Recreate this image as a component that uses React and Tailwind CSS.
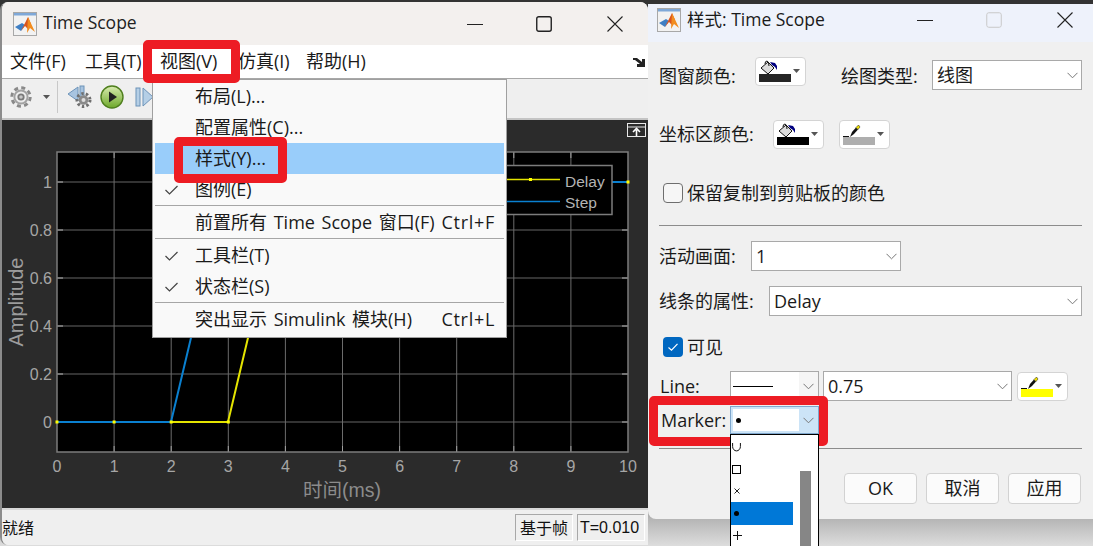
const XTICKS = [0, 1, 2, 3, 4, 5, 6, 7, 8, 9, 10];
const YTICKS = [
  { label: '0', y: 422 },
  { label: '0.2', y: 374 },
  { label: '0.4', y: 326 },
  { label: '0.6', y: 278 },
  { label: '0.8', y: 230 },
  { label: '1', y: 182 },
];
const xPos = (i) => 57 + i * 57.1;

const MENU_BAR = [
  { label: '文件(F)', w: 'w-[75px]' },
  { label: '工具(T)', w: 'w-[75px]' },
  { label: '视图(V)', w: 'w-[78px]' },
  { label: '仿真(I)', w: 'w-[68px]' },
  { label: '帮助(H)', w: 'w-[70px]' },
];

function MatlabIcon() {
  return (
    <svg width="24" height="24" viewBox="0 0 24 24" className="shrink-0">
      <rect x="0.5" y="0.5" width="23" height="23" fill="#f2f2f2" stroke="#a8a8a8" />
      <rect x="1" y="1" width="22" height="2.5" fill="#7fa8d8" />
      <path d="M2 15 L9 11 L12 13 L8 19 Z" fill="#3f7fc4" />
      <path d="M8 19 L12 11 L15 5 L18 12 L15 17 L12 14 Z" fill="#d9541e" />
      <path d="M15 5 L22 20 L17 16 L14 21 Z" fill="#f28c1e" />
    </svg>
  );
}

function Gear({ size = 22 }) {
  return (
    <svg width={size} height={size} viewBox="0 0 22 22">
      <circle cx="11" cy="11" r="9.2" fill="none" stroke="#8a8a8a" strokeWidth="3" strokeDasharray="4 3.22" />
      <circle cx="11" cy="11" r="7.6" fill="#a2a2a2" />
      <circle cx="11" cy="11" r="5.6" fill="#ececec" />
      <circle cx="11" cy="11" r="3.6" fill="#7a7a7a" />
      <circle cx="11" cy="11" r="1.8" fill="#c8c8c8" />
    </svg>
  );
}

function Caret({ className }) {
  return (
    <svg width="7" height="4" viewBox="0 0 7 4" className={className}>
      <path d="M0 0 H7 L3.5 4 Z" fill="#555" />
    </svg>
  );
}

function Chevron() {
  return (
    <svg width="11" height="7" viewBox="0 0 11 7" className="shrink-0">
      <path d="M0.5 0.8 L5.5 5.8 L10.5 0.8" fill="none" stroke="#777" />
    </svg>
  );
}

function Bucket() {
  return (
    <svg width="24" height="18" viewBox="0 0 24 18" className="absolute left-0 top-0">
      <path d="M5 10 L12 4 L18 10 L12 16 Z" fill="#dcdcdc" stroke="#111" />
      <path d="M9 6 Q9 3 11 3 Q13 3 13 8" fill="none" stroke="#111" />
      <path d="M14 4 L19 5 L21 8 L21 12 L19 9 L16 7 Z" fill="#000080" />
    </svg>
  );
}

function Pencil() {
  return (
    <svg width="24" height="18" viewBox="0 0 24 18" className="absolute left-0 top-0">
      <path d="M3 15.5 H9" stroke="#111" />
      <path d="M10 16 L12 11 L16 6.5 L18 8.5 L14 13 Z" fill="#111" />
      <path d="M16 6.5 L18.5 4 L20 6 L18 8.5 Z" fill="#f0e000" stroke="#111" strokeWidth="0.5" />
    </svg>
  );
}

function ColorButton({ swatch, icon }) {
  return (
    <div className="relative w-[51px] h-[29px] rounded-[4px] border border-[#d4d4d4] bg-white shrink-0">
      {icon}
      <div className={`absolute left-[3px] top-[16px] w-[32px] h-[8px] ${swatch}`} />
      <Caret className="absolute right-[5px] top-[11px]" />
    </div>
  );
}

function Combo({ width, height = 'h-[30px]', children }) {
  return (
    <div className={`flex items-center justify-between border border-[#a9a9a9] bg-white pl-[4px] pr-[3px] shrink-0 ${width} ${height}`}>
      <span className="truncate">{children}</span>
      <Chevron />
    </div>
  );
}

function Check({ on }) {
  if (on) {
    return (
      <span className="flex items-center justify-center w-[20px] h-[20px] rounded-[4px] bg-[#0067c0] shrink-0">
        <svg width="12" height="10" viewBox="0 0 12 10">
          <path d="M1.5 5.5 L4.5 8.2 L10.5 1.8" fill="none" stroke="#fff" strokeWidth="1.2" />
        </svg>
      </span>
    );
  }
  return <span className="w-[20px] h-[20px] rounded-[4px] border border-[#6e6e6e] bg-[#f6f6f6] shrink-0" />;
}

function DialogButton({ children }) {
  return (
    <div className="flex items-center justify-center w-[73px] h-[31px] rounded-[4px] border border-[#d2d2d2] bg-[#fbfbfb]">
      {children}
    </div>
  );
}

function WindowButtons({ disabled }) {
  return (
    <div className="flex items-center ml-auto">
      <svg width="16" height="16" viewBox="0 0 16 16">
        <path d="M0 8.5 H16" stroke="#222" />
      </svg>
      <svg width="16" height="16" viewBox="0 0 16 16" className="ml-[53px]">
        <rect x="0.75" y="0.75" width="14.5" height="14.5" rx="2" fill="none" stroke={disabled ? '#c8c8c8' : '#222'} strokeWidth={disabled ? 1 : 1.4} />
      </svg>
      <svg width="16" height="16" viewBox="0 0 16 16" className="ml-[55px]">
        <path d="M0.5 0.5 L15.5 15.5 M15.5 0.5 L0.5 15.5" stroke="#222" strokeWidth="1.1" />
      </svg>
    </div>
  );
}

function Plot() {
  return (
    <svg viewBox="2 120 646 388" width="646" height="388" className="block shrink-0">
      <rect x="2" y="120" width="646" height="388" fill="#2b2b2b" />
      <rect x="57" y="152" width="571" height="300" fill="#000" />
      {YTICKS.map((t) => (
        <line key={t.label} x1="57" x2="628" y1={t.y} y2={t.y} stroke="#454545" strokeWidth="1.5" />
      ))}
      {XTICKS.slice(1, 10).map((i) => (
        <line key={i} x1={xPos(i)} x2={xPos(i)} y1="152" y2="452" stroke="#6c6c6c" />
      ))}
      {YTICKS.map((t) => (
        <g key={t.label} stroke="#8a8a8a" strokeWidth="1.5">
          <line x1="57" x2="63" y1={t.y} y2={t.y} />
          <line x1="622" x2="628" y1={t.y} y2={t.y} />
        </g>
      ))}
      {XTICKS.slice(1, 10).map((i) => (
        <g key={i} stroke="#a0a0a0">
          <line x1={xPos(i)} x2={xPos(i)} y1="446" y2="452" />
          <line x1={xPos(i)} x2={xPos(i)} y1="152" y2="158" />
        </g>
      ))}
      <rect x="57" y="152" width="571" height="300" fill="none" stroke="#7c7c7c" strokeWidth="1.5" />

      <polyline points="57,422 228,422 285,182 628,182" fill="none" stroke="#e4e400" strokeWidth="2" />
      <polyline points="57,422 171,422 228,182 628,182" fill="none" stroke="#0a80d0" strokeWidth="2" />
      {XTICKS.map((i) => (
        <rect key={i} x={xPos(i) - 1.5} y={i < 4 ? 420.5 : 180.5} width="3" height="3" fill="#ffff00" />
      ))}

      <rect x="400" y="165.5" width="212" height="49" fill="#000" stroke="#7c7c7c" strokeWidth="1.5" />
      <line x1="410" x2="560" y1="179.5" y2="179.5" stroke="#e4e400" strokeWidth="1.5" />
      <rect x="529" y="178" width="3" height="3" fill="#ffff00" />
      <line x1="410" x2="560" y1="201.5" y2="201.5" stroke="#0a80d0" strokeWidth="1.5" />
      <g className="font-['Liberation_Sans',sans-serif] text-[15.5px]" fill="#b4b4b4">
        <text x="565" y="187">Delay</text>
        <text x="565" y="208">Step</text>
      </g>

      <g className="font-['Liberation_Sans',sans-serif] text-[16px]" fill="#a6a6a6">
        {XTICKS.map((i) => (
          <text key={i} x={xPos(i)} y="472" textAnchor="middle">{i}</text>
        ))}
        {YTICKS.map((t) => (
          <text key={t.label} x="52" y={t.y + 6} textAnchor="end">{t.label}</text>
        ))}
      </g>
      <text x="342" y="497" textAnchor="middle" fill="#8c8c8c" className="font-['Liberation_Sans','Noto_Sans_CJK_SC',sans-serif] text-[19.5px]">时间(ms)</text>
      <text transform="translate(23 302) rotate(-90)" textAnchor="middle" fill="#9c9c9c" className="font-['Liberation_Sans',sans-serif] text-[20px]">Amplitude</text>

      {/* undock button */}
      <rect x="627.5" y="123.5" width="18" height="13" fill="#2b2b2b" stroke="#e8e8e8" />
      <path d="M628 127 H645" stroke="#e8e8e8" />
      <path d="M636.5 136 V130 M633 132 L636.5 128.5 L640 132" fill="none" stroke="#fff" strokeWidth="1.6" />
    </svg>
  );
}

function Toolbar() {
  return (
    <div className="flex items-center h-[41px] shrink-0 bg-[#efefef] pl-[8px] pb-[3px] border-b-2 border-[#c4c4c4]">
      <Gear />
      <Caret className="ml-[11px]" />
      <div className="w-px h-[32px] bg-[#c8c8c8] ml-[7px]" />
      <svg width="25" height="24" viewBox="0 0 25 24" className="ml-[10px]">
        <path d="M0 9 L10 2 V16 Z" fill="#a8c4e0" stroke="#6d93b8" />
        <rect x="12" y="1" width="4" height="12" fill="#a8c4e0" stroke="#6d93b8" />
        <circle cx="15.5" cy="15" r="6.5" fill="none" stroke="#6f6f6f" strokeWidth="3" strokeDasharray="2.4 2.2" />
        <circle cx="15.5" cy="15" r="4.8" fill="#8a8a8a" />
        <circle cx="15.5" cy="15" r="2" fill="#ddd" />
      </svg>
      <svg width="24" height="24" viewBox="0 0 24 24" className="ml-[7px]">
        <defs>
          <linearGradient id="playFill" x1="0" y1="0" x2="0" y2="1">
            <stop offset="0" stopColor="#d9ecb0" />
            <stop offset="1" stopColor="#6da82a" />
          </linearGradient>
        </defs>
        <circle cx="12" cy="12" r="11" fill="url(#playFill)" stroke="#4f7f1e" strokeWidth="1.4" />
        <path d="M9 6.5 L17 12 L9 17.5 Z" fill="#222" />
      </svg>
      <svg width="18" height="24" viewBox="0 0 18 24" className="ml-[11px]">
        <rect x="1" y="3" width="4" height="18" fill="#b5cfe6" stroke="#6d93b8" />
        <path d="M8 3 L18 12 L8 21 Z" fill="#b5cfe6" stroke="#6d93b8" />
      </svg>
    </div>
  );
}

function ScopeWindow() {
  return (
    <section className="absolute left-0 top-[2px] w-[648px] h-[543px] flex flex-col overflow-hidden rounded-t-[8px] rounded-bl-[8px] bg-[#efefef] border-l-2 border-[#8c8c8c]">
      <header className="flex items-center h-[43px] shrink-0 bg-[#f3f0ee] pl-[11px] pr-[25px] text-[#222]">
        <MatlabIcon />
        <span className="ml-[6px] text-[17.5px] -mt-[2px]">Time Scope</span>
        <WindowButtons />
      </header>
      <nav className="relative flex items-center h-[34px] shrink-0 bg-white pl-[8px] border-b border-[#a8a8a8] text-[18px] text-[#1a1a1a]">
        {MENU_BAR.map((m) => (
          <span key={m.label} className={m.w}>{m.label}</span>
        ))}
        <svg width="12" height="10" viewBox="0 0 12 10" className="ml-auto mr-[3px]">
          <path d="M0 1 L4 1 L9 5 V2 H12 V10 H4 V7 H7 L2 3 H0 Z" fill="#222" />
        </svg>
      </nav>
      <Toolbar />
      <Plot />
      <footer className="flex items-center flex-1 border-t-2 border-[#d8d8d8] bg-[#efefef] text-[16px] text-[#111]">
        <span>就绪</span>
        <div className="flex items-center justify-center ml-auto w-[58px] h-[27px] border-l border-t border-[#a8a8a8] border-r-white border-b-white border-r border-b">基于帧</div>
        <div className="flex items-center pl-[2px] ml-[4px] mr-[3px] w-[68px] h-[27px] font-['Liberation_Sans',sans-serif] border-l border-t border-[#a8a8a8] border-r-white border-b-white border-r border-b">T=0.010</div>
      </footer>
    </section>
  );
}

const MENU_ROWS = [
  { label: '布局(L)...' },
  { label: '配置属性(C)...' },
  { label: '样式(Y)...', hot: true },
  { label: '图例(E)', check: true, sep: true },
  { label: '前置所有 Time Scope 窗口(F)', key_: 'Ctrl+F', sep: true },
  { label: '工具栏(T)', check: true },
  { label: '状态栏(S)', check: true, sep: true },
  { label: '突出显示 Simulink 模块(H)', key_: 'Ctrl+L' },
];

function ViewMenu() {
  return (
    <div className="absolute left-[152px] top-[79px] w-[355px] h-[259px] pt-[1px] px-[2px] bg-[#f9f9f9] border border-[#a0a0a0] text-[18px] text-[#1a1a1a]">
      {MENU_ROWS.map((r) => (
        <div key={r.label} className={r.sep ? 'border-b border-[#a6a6a6] mb-[1px]' : ''}>
          <div className={`relative flex items-center h-[31px] pl-[40px] pr-[9px] ${r.hot ? 'bg-[#99cdfa]' : ''}`}>
            {r.check && (
              <svg width="13" height="10" viewBox="0 0 13 10" className="absolute left-[10px] top-[11px]">
                <path d="M0.5 5 L4.5 9 L12.5 1" fill="none" stroke="#444" strokeWidth="1.2" />
              </svg>
            )}
            <span className="[word-spacing:2px]">{r.label}</span>
            {r.key_ && <span className="ml-auto tracking-[0.7px]">{r.key_}</span>}
          </div>
        </div>
      ))}
    </div>
  );
}

function StyleDialog() {
  return (
    <section className="absolute left-[648px] top-[4px] w-[445px] h-[515px] flex flex-col rounded-bl-[8px] bg-[#f0f0f0] text-[18px] text-[#1a1a1a]">
      <header className="flex items-center h-[38px] bg-[#eef2fb] pl-[9px] pr-[20px] pb-[7px] text-[17.5px]">
        <MatlabIcon />
        <span className="ml-[6px]">样式: Time Scope</span>
        <WindowButtons disabled />
      </header>
      <div className="flex flex-col pl-[11px] pr-[11px] pt-[15px]">
        <div className="flex items-start h-[33px]">
          <span className="w-[96px] h-[38px] flex items-center">图窗颜色:</span>
          <ColorButton swatch="bg-[#262626]" icon={<Bucket />} />
          <span className="ml-[35px] w-[91px] h-[38px] flex items-center">绘图类型:</span>
          <div className="mt-[3px]"><Combo width="w-[150px]">线图</Combo></div>
        </div>
        <div className="flex items-center h-[29px] mt-[30px]">
          <span className="w-[114px]">坐标区颜色:</span>
          <ColorButton swatch="bg-black" icon={<Bucket />} />
          <div className="ml-[15px]"><ColorButton swatch="bg-[#aeaeae]" icon={<Pencil />} /></div>
        </div>
        <label className="flex items-center gap-[4px] h-[20px] mt-[34px] pl-[4px]">
          <Check />
          <span>保留复制到剪贴板的颜色</span>
        </label>
        <div className="h-px bg-[#8c8c8c] mt-[22px]" />
        <div className="flex items-center h-[30px] mt-[15px]">
          <span className="w-[92px]">活动画面:</span>
          <Combo width="w-[150px]">1</Combo>
        </div>
        <div className="flex items-center h-[30px] mt-[15px]">
          <span className="w-[110px]">线条的属性:</span>
          <Combo width="w-[313px]">Delay</Combo>
        </div>
        <label className="flex items-center gap-[4px] h-[20px] mt-[21px] pl-[4px]">
          <Check on />
          <span>可见</span>
        </label>
        <div className="flex items-center h-[30px] mt-[14px]">
          <span className="w-[71px] pl-[1px]">Line:</span>
          <div className="flex items-center w-[89px] h-[30px] border border-[#a9a9a9] bg-white">
            <div className="h-px w-[40px] ml-[2px] bg-black" />
            <div className="flex items-center justify-center ml-auto w-[19px] h-full bg-[#f5f5f5]"><Chevron /></div>
          </div>
          <div className="ml-[4px]"><Combo width="w-[189px]">0.75</Combo></div>
          <div className="ml-[5px]"><ColorButton swatch="bg-[#ffff00]" icon={<Pencil />} /></div>
        </div>
        <div className="flex items-center h-[28px] mt-[5px]">
          <span className="w-[71px] pl-[2px]">Marker:</span>
          <div className="flex items-center w-[89px] h-[28px] border border-[#7ea6cc] bg-[#cce4f7]">
            <div className="flex items-center w-[66px] h-[22px] ml-[2px] bg-white pl-[3px]">
              <span className="block w-[5px] h-[5px] rounded-full bg-black" />
            </div>
            <div className="flex items-center justify-center flex-1"><Chevron /></div>
          </div>
        </div>
        <div className="h-px bg-[#8c8c8c] mt-[14px]" />
        <div className="flex justify-end gap-[9px] mt-[24px] pr-[1px]">
          <DialogButton>OK</DialogButton>
          <DialogButton>取消</DialogButton>
          <DialogButton>应用</DialogButton>
        </div>
      </div>
    </section>
  );
}

function MarkerList() {
  return (
    <div className="absolute left-[730px] top-[434px] w-[89px] h-[114px] flex bg-white border border-black overflow-hidden">
      <div className="flex flex-col w-[62px]">
        <div className="flex items-start h-[24px] pl-[1px] pt-[8px]">
          <svg width="9" height="9" viewBox="0 0 9 9">
            <path d="M0.6 0 V3.5 A3.9 4.4 0 0 0 8.4 3.5 V0" fill="none" stroke="#111" />
          </svg>
        </div>
        <div className="flex items-center h-[24px] pl-[1px]">
          <span className="block w-[9px] h-[9px] border border-black" />
        </div>
        <div className="flex items-center h-[24px] pl-[3px]">
          <svg width="6" height="6" viewBox="0 0 6 6">
            <path d="M0.5 0.5 L5.5 5.5 M5.5 0.5 L0.5 5.5" stroke="#222" />
          </svg>
        </div>
        <div className="flex items-center h-[24px] pl-[3px] bg-[#0078d7]">
          <span className="block w-[5px] h-[5px] rounded-full bg-black" />
        </div>
        <div className="flex items-center h-[24px] pl-[2px]">
          <svg width="9" height="9" viewBox="0 0 9 9">
            <path d="M4.5 0 V9 M0 4.5 H9" stroke="#111" />
          </svg>
        </div>
      </div>
      <div className="flex-1 pl-[7px] pt-[36px]">
        <div className="w-[11px] h-[80px] bg-[#868686]" />
      </div>
    </div>
  );
}

export default function App() {
  return (
    <div className="relative w-[1093px] h-[546px] overflow-hidden bg-[linear-gradient(180deg,#333333_0,#333333_84%,#b5b5b5_95%,#dddddd_100%)] font-['Open_Sans','Noto_Sans_CJK_SC',sans-serif]">
      <ScopeWindow />
      <ViewMenu />
      <StyleDialog />

      {/* red call-outs drawn on top of the screenshot */}
      <div className="absolute left-[143px] top-[40px] w-[97px] h-[43px] rounded-[5px] border-[9px] border-[#ed1c24]" />
      <div className="absolute left-[174px] top-[137px] w-[113px] h-[46px] rounded-[5px] border-[9px] border-[#ed1c24]" />
      <div className="absolute left-[649px] top-[396px] w-[179px] h-[50px] rounded-[5px] border-[9px] border-[#ed1c24]" />

      <MarkerList />
    </div>
  );
}
